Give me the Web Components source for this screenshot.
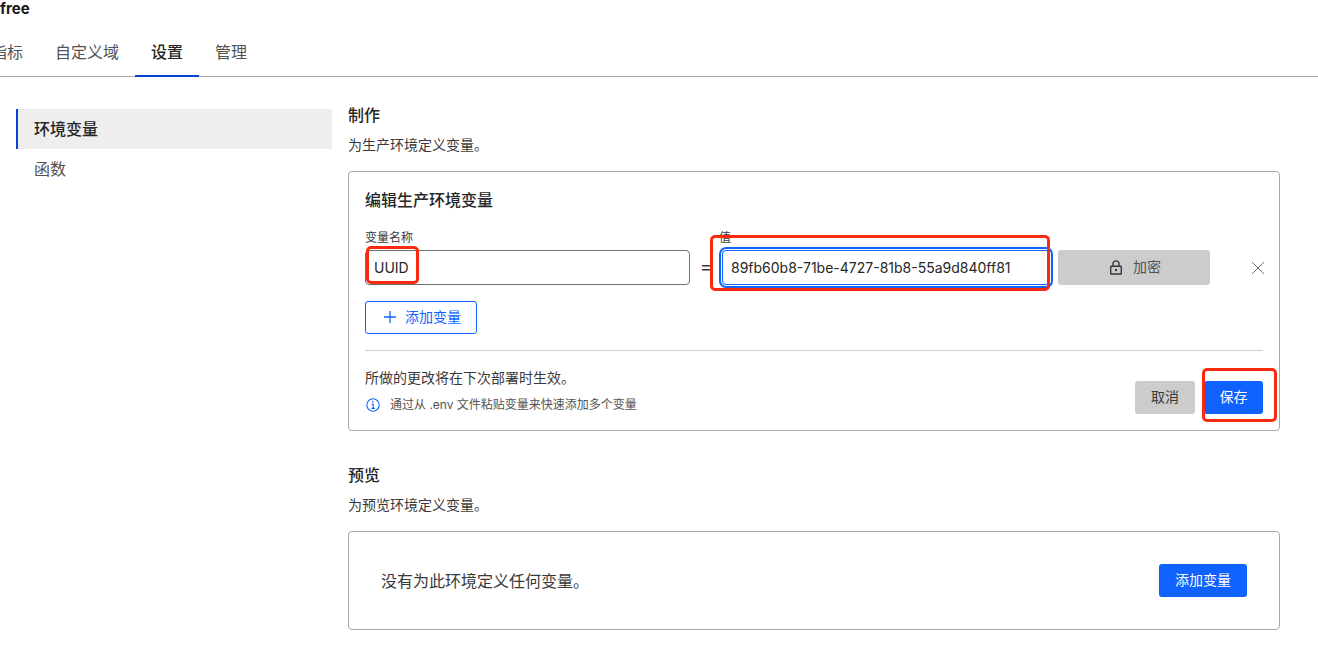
<!DOCTYPE html>
<html lang="zh">
<head>
<meta charset="utf-8">
<title>环境变量</title>
<style>
html,body{margin:0;height:100%;background:#fff;overflow:hidden;}
body{font-family:Inter,"Noto Sans CJK SC",sans-serif;color:#262626;width:1318px;height:653px;}
</style>
</head>
<body>
<app-page>
    <app-header slot="header">free</app-header>
    <tab-bar slot="tabs">
        <tab-item>指标</tab-item>
        <tab-item>自定义域</tab-item>
        <tab-item active>设置</tab-item>
        <tab-item>管理</tab-item>
    </tab-bar>
    <side-nav slot="side">
        <side-item active>环境变量</side-item>
        <side-item>函数</side-item>
    </side-nav>
    <env-section slot="main" heading="制作" desc="为生产环境定义变量。">
        <edit-card heading="编辑生产环境变量"></edit-card>
    </env-section>
    <env-section slot="main" heading="预览" desc="为预览环境定义变量。" style="--top:37px">
        <empty-card>没有为此环境定义任何变量。</empty-card>
    </env-section>
</app-page>

<script>
const LOCK = '<svg width="12" height="15" viewBox="0 0 12 15" fill="none" stroke="#393939" stroke-width="1.4"><rect x=".7" y="6.2" width="10.6" height="7.8" rx=".5"/><path d="M3 6.2V3.9a3 3 0 0 1 6 0V6.2"/><circle cx="6" cy="10" r="1.2" fill="#393939" stroke="none"/></svg>';
const CLOSE = '<svg width="14" height="14" viewBox="0 0 14 14" fill="none" stroke="#6f6f6f" stroke-width="1"><path d="M1 1l12 12M13 1L1 13"/></svg>';
const PLUS = '<svg width="12" height="12" viewBox="0 0 12 12" fill="none" stroke="currentColor" stroke-width="1.3"><path d="M6 0v12M0 6h12"/></svg>';
const INFO = '<svg width="14" height="14" viewBox="0 0 14 14" fill="none" stroke="#0f62fe" stroke-width="1.1"><circle cx="7" cy="7" r="6.2"/><path d="M5.6 6.2H7.2V10.4M5.4 10.4H9"/><circle cx="6.9" cy="3.9" r=".8" fill="#0f62fe" stroke="none"/></svg>';

class AppPage extends HTMLElement {
    constructor() {
        super();
        this.attachShadow({ mode: 'open' }).innerHTML = `
        <style>
        :host{ display:block; width:1318px; height:653px; overflow:hidden; }
        .body{ display:flex; padding:32px 38px 0 16px; }
        .side{ width:316px; flex:none; }
        .main{ flex:1; margin-left:16px; margin-top:-1px; min-width:0; }
        </style>
        <slot name="header"></slot>
        <slot name="tabs"></slot>
        <div class="body">
            <div class="side"><slot name="side"></slot></div>
            <div class="main"><slot name="main"></slot></div>
        </div>`;
    }
}

class AppHeader extends HTMLElement {
    constructor() {
        super();
        this.attachShadow({ mode: 'open' }).innerHTML = `
        <style>
        :host{ display:block; height:28px; font-size:15px; font-weight:700; line-height:17px; color:#1a1a1a; }
        </style>
        <slot></slot>`;
    }
}

class TabBar extends HTMLElement {
    constructor() {
        super();
        this.attachShadow({ mode: 'open' }).innerHTML = `
        <style>
        :host{ display:flex; height:48px; border-bottom:1px solid #a8a8a8; box-sizing:content-box; }
        .row{ display:flex; margin-left:-25px; }
        </style>
        <div class="row"><slot></slot></div>`;
    }
}

class TabItem extends HTMLElement {
    constructor() {
        super();
        this.attachShadow({ mode: 'open' }).innerHTML = `
        <style>
        :host{ display:block; position:relative; height:48px; padding:0 16px; font-size:16px; line-height:48px; color:#525252; }
        :host([active]){ color:#262626; font-weight:500; }
        :host([active])::after{ content:''; position:absolute; left:0; right:0; bottom:-1px; height:2px; background:#0043ce; }
        </style>
        <slot></slot>`;
    }
}

class SideNav extends HTMLElement {
    constructor() {
        super();
        this.attachShadow({ mode: 'open' }).innerHTML = `
        <style>:host{ display:block; }</style><slot></slot>`;
    }
}

class SideItem extends HTMLElement {
    constructor() {
        super();
        this.attachShadow({ mode: 'open' }).innerHTML = `
        <style>
        :host{ display:block; height:40px; padding-left:18px; font-size:16px; line-height:40px; color:#525252; }
        :host([active]){ background:#eeeeee; box-shadow:inset 2px 0 0 #0043ce; color:#262626; font-weight:500; }
        </style>
        <slot></slot>`;
    }
}

class EnvSection extends HTMLElement {
    constructor() {
        super();
        this.attachShadow({ mode: 'open' }).innerHTML = `
        <style>
        :host{ display:block; margin-top:var(--top,0); }
        h2{ margin:0; font-size:16px; font-weight:500; line-height:14px; color:#262626; }
        p{ margin:14px 0 0; font-size:14px; line-height:18px; color:#393939; }
        .body{ margin-top:17px; }
        </style>
        <h2 id="h"></h2>
        <p id="d"></p>
        <div class="body"><slot></slot></div>`;
    }

    connectedCallback() {
        this.shadowRoot.getElementById('h').textContent = this.getAttribute('heading');
        this.shadowRoot.getElementById('d').textContent = this.getAttribute('desc');
    }
}

class UiButton extends HTMLElement {
    constructor() {
        super();
        this.attachShadow({ mode: 'open' }).innerHTML = `
        <style>
        :host{ display:inline-flex; align-items:center; justify-content:center; gap:8px; box-sizing:border-box; height:33px; border-radius:3px; font-size:14px; white-space:nowrap; }
        :host([type="primary"]){ background:#0f62fe; color:#fff; }
        :host([type="muted"]){ background:#cccccc; color:#393939; }
        :host([type="outline"]){ border:1px solid #0f62fe; color:#0f62fe; }
        .in{ display:flex; align-items:center; gap:inherit; padding-bottom:3px; }
        </style>
        <div class="in"><slot></slot></div>`;
    }
}

class EnvField extends HTMLElement {
    constructor() {
        super();
        this.attachShadow({ mode: 'open' }).innerHTML = `
        <style>
        :host{ display:block; position:relative; }
        label{ display:block; height:19px; padding-top:1px; font-size:12px; line-height:14px; color:#393939; }
        .box{ box-sizing:border-box; height:35px; padding:0 8px; border:1px solid #6f6f6f; border-radius:4px; font-size:14px; line-height:33px; color:#262626; }
        :host([focus]) label{ margin-left:-3px; }
        :host([focus]) .box{ padding-left:8px; border-color:#0f62fe; box-shadow:0 0 0 1px #fff, 0 0 0 3px #0f62fe; }
        </style>
        <label id="l"></label>
        <div class="box" id="b"></div>
        <slot></slot>`;
    }

    connectedCallback() {
        this.shadowRoot.getElementById('l').textContent = this.getAttribute('label');
        this.shadowRoot.getElementById('b').textContent = this.getAttribute('value');
    }
}

class MarkBox extends HTMLElement {
    constructor() {
        super();
        this.attachShadow({ mode: 'open' }).innerHTML = `
        <style>
        :host{ display:block; position:absolute; box-sizing:border-box; border:3px solid #fa2a10; border-radius:5px; pointer-events:none; }
        </style>`;
    }
}

class EditCard extends HTMLElement {
    constructor() {
        super();
        this.attachShadow({ mode: 'open' }).innerHTML = `
        <style>
        :host{ display:block; position:relative; box-sizing:border-box; height:260px; padding:18px 16px 0; border:1px solid #a8a8a8; border-radius:4px; }
        h3{ margin:0; font-size:16px; font-weight:500; line-height:20px; color:#262626; }
        .vars{ display:flex; align-items:flex-end; margin-top:20px; }
        .vars > *{ flex:none; }
        .name{ width:325px; }
        .eq{ width:32px; height:35px; line-height:34px; text-align:center; font-size:18px; color:#393939; }
        .val{ width:328px; }
        .enc{ width:152px; height:35px; margin-left:8px; padding-left:3px; gap:11px; color:#525252; }
        .enc svg{ margin-top:3px; }
        .del{ margin-left:41px; height:35px; display:flex; align-items:center; }
        .add{ width:112px; margin-top:16px; display:flex; justify-content:flex-start; padding-left:18px; gap:9px; }
        .add svg{ margin-top:2px; }
        hr{ margin:16px 0 0; border:0; border-top:1px solid #cfcfcf; }
        .foot{ display:flex; justify-content:space-between; }
        .hint{ padding-top:17px; font-size:14px; line-height:20px; color:#393939; }
        .tip{ display:flex; align-items:center; gap:10px; margin-top:10px; font-size:12px; line-height:14px; color:#525252; }
        .tip svg{ flex:none; margin-left:1px; }
        .acts{ display:flex; gap:9px; padding-top:30px; }
        .acts ui-button{ width:60px; }
        .acts ui-button[type="primary"]{ width:59px; }
        .m1{ left:17px; top:74px; width:53px; height:38px; }
        .m2{ left:361px; top:63px; width:340px; height:56px; }
        .m3{ left:853px; top:196px; width:75px; height:54px; }
        </style>
        <h3 id="t"></h3>
        <div class="vars">
            <env-field class="name" label="变量名称" value="UUID"></env-field>
            <div class="eq">=</div>
            <env-field class="val" label="值" value="89fb60b8-71be-4727-81b8-55a9d840ff81" focus></env-field>
            <ui-button class="enc" type="muted">${LOCK}<span>加密</span></ui-button>
            <div class="del">${CLOSE}</div>
        </div>
        <ui-button class="add" type="outline">${PLUS}<span>添加变量</span></ui-button>
        <hr>
        <div class="foot">
            <div class="hint">
                所做的更改将在下次部署时生效。
                <div class="tip">${INFO}<span>通过从 .env 文件粘贴变量来快速添加多个变量</span></div>
            </div>
            <div class="acts">
                <ui-button type="muted">取消</ui-button>
                <ui-button type="primary">保存</ui-button>
            </div>
        </div>
        <mark-box class="m1"></mark-box>
        <mark-box class="m2"></mark-box>
        <mark-box class="m3"></mark-box>`;
    }

    connectedCallback() {
        this.shadowRoot.getElementById('t').textContent = this.getAttribute('heading');
    }
}

class EmptyCard extends HTMLElement {
    constructor() {
        super();
        this.attachShadow({ mode: 'open' }).innerHTML = `
        <style>
        :host{ display:flex; align-items:center; justify-content:space-between; box-sizing:border-box; height:99px; padding:0 32px; border:1px solid #a8a8a8; border-radius:4px; font-size:16px; color:#393939; }
        ui-button{ width:88px; }
        .msg{ padding-bottom:1px; }
        </style>
        <div class="msg"><slot></slot></div>
        <ui-button type="primary">添加变量</ui-button>`;
    }
}

customElements.define('app-page', AppPage);
customElements.define('app-header', AppHeader);
customElements.define('tab-bar', TabBar);
customElements.define('tab-item', TabItem);
customElements.define('side-nav', SideNav);
customElements.define('side-item', SideItem);
customElements.define('env-section', EnvSection);
customElements.define('ui-button', UiButton);
customElements.define('env-field', EnvField);
customElements.define('mark-box', MarkBox);
customElements.define('edit-card', EditCard);
customElements.define('empty-card', EmptyCard);
</script>
</body>
</html>
